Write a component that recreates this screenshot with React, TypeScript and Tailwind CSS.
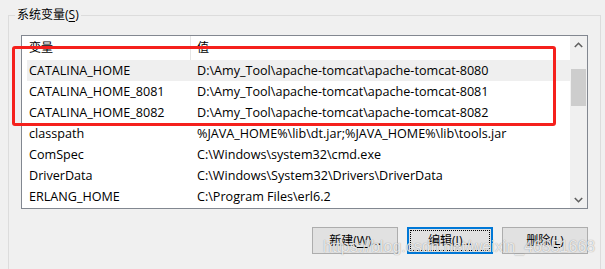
import React from 'react';

const rows = [
  { name: 'CATALINA_HOME', value: 'D:\\Amy_Tool\\apache-tomcat\\apache-tomcat-8080' },
  { name: 'CATALINA_HOME_8081', value: 'D:\\Amy_Tool\\apache-tomcat\\apache-tomcat-8081' },
  { name: 'CATALINA_HOME_8082', value: 'D:\\Amy_Tool\\apache-tomcat\\apache-tomcat-8082' },
  { name: 'classpath', value: '%JAVA_HOME%\\lib\\dt.jar;%JAVA_HOME%\\lib\\tools.jar' },
  { name: 'ComSpec', value: 'C:\\Windows\\system32\\cmd.exe' },
  { name: 'DriverData', value: 'C:\\Windows\\System32\\Drivers\\DriverData' },
  { name: 'ERLANG_HOME', value: 'C:\\Program Files\\erl6.2' },
];

const Chevron: React.FC<{ up?: boolean }> = ({ up }) => (
  <svg width="9" height="6" viewBox="0 0 9 6" className={up ? '' : 'rotate-180'}>
    <path d="M0.8 5 L4.5 1.3 L8.2 5" fill="none" stroke="#606060" strokeWidth="1.6" />
  </svg>
);

const WinButton: React.FC<{ label: string; hot: string; rest?: string; focused?: boolean }> = ({ label, hot, rest = '', focused }) => (
  <button
    className={`relative w-[86px] h-[27px] bg-[#e1e1e1] text-[12px] text-black flex items-center justify-center ${
      focused ? 'border-2 border-[#0078d7]' : 'border border-[#adadad]'
    }`}
  >
    {focused && <span className="absolute inset-[1px] border border-dotted border-black" />}
    <span>
      {label}(<span className="underline underline-offset-2">{hot}</span>){rest}
    </span>
  </button>
);

const App: React.FC = () => {
  return (
    <div
      className="relative w-[605px] h-[269px] bg-[#f0f0f0] overflow-hidden pl-[8px] pt-[15px] text-black"
      style={{ fontFamily: "'Open Sans', 'Noto Sans CJK SC', sans-serif" }}
    >
      {/* Group box */}
      <div className="relative w-[593px] h-[260px] border border-b-0 border-[#dcdcdc] pl-[12px] pt-[19px]">
        <span className="absolute left-[6px] top-[-9px] px-[2px] bg-[#f0f0f0] text-[12px] leading-[16px]">
          系统变量(<span className="underline underline-offset-2">S</span>)
        </span>

        {/* List view */}
        <div className="flex w-[567px] h-[174px] border border-[#828790] bg-white">
          <div className="flex-1 flex flex-col">
            <div className="flex h-[24px] text-[12px] items-stretch">
              <div className="w-[168px] pl-[7px] flex items-center">变量</div>
              <div className="w-px bg-[#e5e5e5]" />
              <div className="pl-[6px] flex items-center">值</div>
            </div>
            {rows.map((row, i) => (
              <div
                key={row.name}
                className={`flex h-[21px] ml-[5px] pt-px items-center text-[12.6px] whitespace-nowrap ${i === 0 ? 'bg-[#efefef]' : ''}`}
              >
                <div className="w-[168px] pl-[2px]">{row.name}</div>
                <div className="pl-[2px]">{row.value}</div>
              </div>
            ))}
          </div>

          {/* Scrollbar */}
          <div className="w-[17px] bg-[#f0f0f0] flex flex-col items-center">
            <div className="h-[17px] flex items-center justify-center">
              <Chevron up />
            </div>
            <div className="mt-[16px] w-[15px] h-[37px] bg-[#cdcdcd]" />
            <div className="flex-1" />
            <div className="h-[17px] flex items-center justify-center">
              <Chevron />
            </div>
          </div>
        </div>

        {/* Buttons */}
        <div className="flex justify-end gap-[9px] w-[567px] mt-[18px]">
          <WinButton label="新建" hot="W" rest="..." />
          <WinButton label="编辑" hot="I" rest="..." focused />
          <WinButton label="删除" hot="L" />
        </div>
      </div>

      {/* Red annotation box */}
      <div className="absolute left-[12px] top-[46px] w-[544px] h-[80px] border-[3px] border-[#f5201c] rounded-[3px] pointer-events-none" />

      {/* Watermark */}
      <div
        className="absolute left-[323px] top-[238px] text-[16px] leading-[18px] text-white/80 whitespace-nowrap [text-shadow:0_0_1px_rgba(0,0,0,0.45)] pointer-events-none"
        style={{ fontFamily: "'Liberation Sans', Arial, sans-serif" }}
      >
        https://blog.csdn.net/weixin_46551668
      </div>
    </div>
  );
};

export default App;
